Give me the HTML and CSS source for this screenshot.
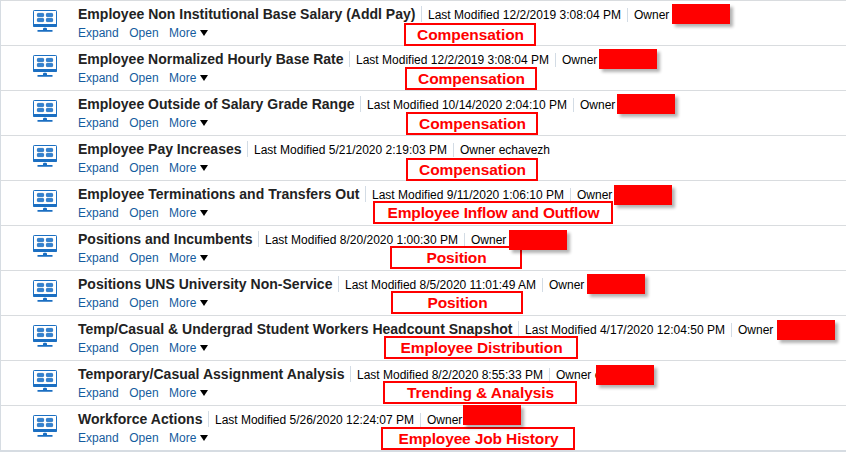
FILE: index.html
```html
<!DOCTYPE html>
<html lang="en">
<head>
<meta charset="utf-8">
<title>Catalog</title>
<link rel="stylesheet" href="styles.css">
</head>
<body>
<svg class="defs" width="0" height="0" aria-hidden="true">
  <symbol id="dashboard" viewBox="0 0 24 22">
    <rect x=".5" y=".5" width="23" height="16" rx=".7" fill="#fff" stroke="#1b6fc2"/>
    <path fill="#1b6fc2" d="M0 14h24v2.300l-.7.7H.7L0 16.300zM10 18.500l1-.7h2l1 .7V20h5.500v1.800h-15V20H10z"/>
    <g fill="#3082d4" stroke="#1b69b8" stroke-width=".8">
      <rect x="4.400" y="3.400" width="6.200" height="3.200" rx=".7"/>
      <rect x="13.400" y="3.400" width="6.200" height="3.200" rx=".7"/>
      <rect x="4.400" y="8.400" width="6.200" height="3.200" rx=".7"/>
      <rect x="13.400" y="8.400" width="6.200" height="3.200" rx=".7"/>
    </g>
  </symbol>
</svg>
<main class="catalog"></main>
<script src="app.js"></script>
</body>
</html>
```
FILE: styles.css
```css
* { box-sizing: border-box; }
body {
  margin: 0;
  background: #fff;
  font: 12px/14px "Liberation Sans", Arial, sans-serif;
  color: #000;
  overflow: hidden;
}
.defs { position: absolute; }
.catalog {
  height: 452px;
  border-left: 1px solid #d6dce2;
  border-bottom: 2px solid #d6dce2;
}
.row {
  position: relative;
  display: flex;
  height: 45px;
  padding-left: 32px;
  border-top: 1px solid #d9dcdf;
}
.icon { width: 24px; height: 22px; margin: 9px 21px 0 0; flex: none; }
.body { flex: 1; min-width: 0; padding-top: 5px; white-space: nowrap; }
.heading { display: flex; height: 16px; }
.title {
  height: 16px;
  font-size: 14px;
  line-height: 16px;
  font-weight: bold;
  color: #222;
  flex: none;
}
.meta { height: 16px; padding: 2px 0 0 6px; flex: none; border-left: 1px solid #d3dce5; }
.owner { height: 14px; margin-top: 2px; padding-left: 6px; border-left: 1px solid #d3dce5; }
.links { display: flex; gap: 10.500px; margin-top: 4px; color: #145c9e; }
.more { display: flex; align-items: center; gap: 4px; }
.more::after {
  content: "";
  border: solid transparent;
  border-width: 6px 4.500px 0;
  border-top-color: #000;
}
.mask {
  position: absolute;
  z-index: 2;
  width: 58px;
  height: 20px;
  background: #f00;
  box-shadow: 3px 3px 3px rgba(0, 0, 0, .3);
}
.tag {
  position: absolute;
  z-index: 1;
  height: 23px;
  padding-left: 1px;
  border: 2px solid #f00;
  background: #fff;
  color: #f00;
  font-size: 15.500px;
  line-height: 20px;
  font-weight: bold;
  text-align: center;
  white-space: nowrap;
}
```
FILE: app.js
```js
// title, title end, modified, modified end, owner, mask [x, y], tag [text, x, y, width, text width]
const rows = [
  ["Employee Non Institutional Base Salary (Addl Pay)", 421, "12/2/2019 3:08:04 PM", 627, "", [672, 4], ["Compensation", 404, 23, 132, 107]],
  ["Employee Normalized Hourly Base Rate", 349, "12/2/2019 3:08:04 PM", 555, "", [599, 49], ["Compensation", 405, 67, 132, 107]],
  ["Employee Outside of Salary Grade Range", 360, "10/14/2020 2:04:10 PM", 573, "", [617, 94], ["Compensation", 406, 112, 132, 107]],
  ["Employee Pay Increases", 247, "5/21/2020 2:19:03 PM", 453, "echavezh", null, ["Compensation", 406, 158, 132, 107]],
  ["Employee Terminations and Transfers Out", 365, "9/11/2020 1:06:10 PM", 570, "", [614, 185], ["Employee Inflow and Outflow", 373, 201, 240, 212]],
  ["Positions and Incumbents", 258, "8/20/2020 1:00:30 PM", 464, "", [509, 230], ["Position", 390, 246, 132, 60]],
  ["Positions UNS University Non-Service", 338, "8/5/2020 11:01:49 AM", 542, "", [587, 274], ["Position", 391, 291, 132, 60]],
  ["Temp/Casual & Undergrad Student Workers Headcount Snapshot", 518, "4/17/2020 12:04:50 PM", 731, "", [777, 320], ["Employee Distribution", 384, 336, 194, 162]],
  ["Temporary/Casual Assignment Analysis", 350, "8/2/2020 8:55:33 PM", 549, "e", [596, 365], ["Trending & Analysis", 383, 381, 194, 147]],
  ["Workforce Actions", 208, "5/26/2020 12:24:07 PM", 420, "", [463, 405], ["Employee Job History", 381, 427, 194, 160]]
];

const TEXT_LEFT = 78;

function el(parent, className, text) {
  const node = document.createElement("div");
  node.className = className;
  if (text) node.textContent = text;
  parent.append(node);
  return node;
}

// Spreads a label's letters so that they fill the given width.
function fit(node, text, width) {
  const span = document.createElement("span");
  span.textContent = text;
  node.append(span);
  const natural = span.getBoundingClientRect().width;
  span.style.letterSpacing = (width - natural) / text.length + "px";
}

const catalog = document.querySelector(".catalog");
rows.forEach(([title, titleEnd, modified, modifiedEnd, owner, mask, tag], i) => {
  const row = el(catalog, "row");
  row.innerHTML = '<svg class="icon"><use href="#dashboard"/></svg>';
  const body = el(row, "body");
  const heading = el(body, "heading");
  const name = el(heading, "title");
  name.style.width = titleEnd - TEXT_LEFT + "px";
  fit(name, title, titleEnd - TEXT_LEFT - 5.5);
  const meta = el(heading, "meta");
  meta.style.width = modifiedEnd - titleEnd + "px";
  fit(meta, "Last Modified " + modified, modifiedEnd - titleEnd - 13);
  el(heading, "owner", "Owner " + owner);
  const links = el(body, "links");
  el(links, "link", "Expand");
  el(links, "link", "Open");
  el(links, "more", "More");

  // Overlays are offset from the inside of the row's left and top borders.
  const top = i * 45 + 1;
  if (mask) {
    const box = el(row, "mask");
    box.style.left = mask[0] - 1 + "px";
    box.style.top = mask[1] - top + "px";
  }
  const label = el(row, "tag");
  label.style.left = tag[1] - 1 + "px";
  label.style.top = tag[2] - top + "px";
  label.style.width = tag[3] + "px";
  fit(label, tag[0], tag[4]);
});
```
